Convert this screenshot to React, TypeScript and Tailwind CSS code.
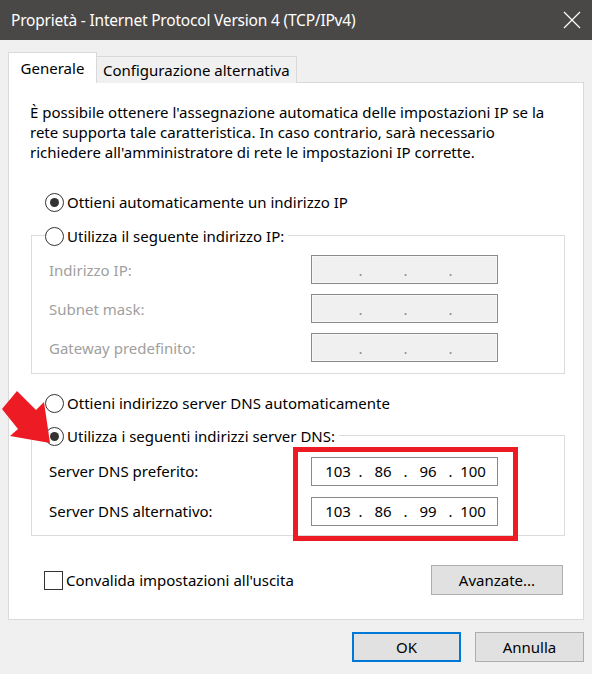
import React from 'react';

const font = { fontFamily: '"Noto Sans", "Open Sans", sans-serif' };

function Radio({ checked }: { checked?: boolean }) {
  return (
    <span className="w-[19px] h-[19px] rounded-full border border-[#333] bg-white flex items-center justify-center shrink-0">
      {checked && <span className="w-[9px] h-[9px] rounded-full bg-[#333]" />}
    </span>
  );
}

function IpBox({ values, disabled }: { values?: string[]; disabled?: boolean }) {
  const cells = values ?? ['', '', '', ''];
  return (
    <div
      className={`w-[187px] h-[29px] border border-[#8a8a8a] flex items-center pl-[8px] ${
        disabled ? 'bg-[#f0f0f0] shadow-[inset_0_0_0_1px_#f7f7f7]' : 'bg-white'
      }`}
    >
      {cells.map((v, i) => (
        <React.Fragment key={i}>
          <span className="w-[36px] text-center">{v}</span>
          {i < 3 && (
            <span className={`w-[9px] text-center ${disabled ? 'text-[#8a8aa0]' : ''}`}>.</span>
          )}
        </React.Fragment>
      ))}
    </div>
  );
}

export default function App() {
  return (
    <div className="relative w-[592px] h-[674px] bg-[#f0f0f0] text-[15px] leading-[20px] text-black overflow-hidden" style={font}>
      {/* Title bar */}
      <div className="h-[40px] bg-[#4a4846] flex items-center justify-between pl-[11px] pr-[11px]">
        <span className="text-white text-[15.5px] tracking-[-0.2px]">Proprietà - Internet Protocol Version 4 (TCP/IPv4)</span>
        <svg width="18" height="18" viewBox="0 0 18 18" className="text-white">
          <path d="M1 1 L17 17 M17 1 L1 17" stroke="currentColor" strokeWidth="1.2" />
        </svg>
      </div>

      <div className="px-[8px] pt-[12px]">
        {/* Tabs */}
        <div className="flex items-end h-[31px] relative z-10">
          <div className="w-[89px] h-[31px] bg-white border border-[#d9d9d9] border-b-0 flex items-center justify-center">
            Generale
          </div>
          <div className="h-[27px] px-[6px] bg-[#f0f0f0] border border-[#d9d9d9] border-l-0 border-b-0 flex items-center">
            Configurazione alternativa
          </div>
        </div>

        {/* Panel */}
        <div className="h-[538px] bg-white border border-[#d9d9d9] -mt-px pt-[19px] pl-[21px] pr-[20px]">
          <p className="pr-[10px]">
            È possibile ottenere l'assegnazione automatica delle impostazioni IP se la rete supporta tale
            caratteristica. In caso contrario, sarà necessario richiedere all'amministratore di rete le
            impostazioni IP corrette.
          </p>

          <div className="mt-[30px] flex items-center gap-[3px] pl-[15px]">
            <Radio checked />
            <span>Ottieni automaticamente un indirizzo IP</span>
          </div>

          {/* Group 1 */}
          <div className="mt-[23px] ml-[1px] w-[534px] h-[139px] border border-[#dcdcdc] relative">
            <div className="absolute -top-[10px] left-[13px] flex items-center gap-[3px] bg-white pr-[4px]">
              <Radio />
              <span>Utilizza il seguente indirizzo IP:</span>
            </div>
            <div className="pt-[19px] pl-[17px] flex flex-col gap-[10px] text-[#a0a0a0]">
              {['Indirizzo IP:', 'Subnet mask:', 'Gateway predefinito:'].map((l) => (
                <div key={l} className="flex items-center h-[29px]">
                  <span className="w-[262px]">{l}</span>
                  <IpBox disabled />
                </div>
              ))}
            </div>
          </div>

          <div className="mt-[19px] flex items-center gap-[3px] pl-[15px]">
            <Radio />
            <span>Ottieni indirizzo server DNS automaticamente</span>
          </div>

          {/* Group 2 */}
          <div className="mt-[22px] ml-[1px] w-[534px] h-[101px] border border-[#dcdcdc] relative">
            <div className="absolute -top-[10px] left-[13px] flex items-center gap-[3px] bg-white pr-[4px]">
              <Radio checked />
              <span>Utilizza i seguenti indirizzi server DNS:</span>
            </div>
            <div className="pt-[20px] pl-[17px] flex flex-col gap-[10px]">
              <div className="flex items-center h-[30px]">
                <span className="w-[262px]">Server DNS preferito:</span>
                <IpBox values={['103', '86', '96', '100']} />
              </div>
              <div className="flex items-center h-[30px]">
                <span className="w-[262px]">Server DNS alternativo:</span>
                <IpBox values={['103', '86', '99', '100']} />
              </div>
            </div>
          </div>

          <div className="mt-[29px] flex items-center justify-between pl-[14px]">
            <div className="flex items-center gap-[3px]">
              <span className="w-[19px] h-[19px] border border-[#333] bg-white" />
              <span>Convalida impostazioni all'uscita</span>
            </div>
            <button className="w-[132px] h-[30px] bg-[#e1e1e1] border border-[#adadad]">Avanzate...</button>
          </div>
        </div>

        {/* Dialog buttons */}
        <div className="mt-[12px] flex justify-end gap-[14px]">
          <button className="w-[109px] h-[30px] bg-[#e1e1e1] border-2 border-[#0078d7]">OK</button>
          <button className="w-[109px] h-[30px] bg-[#e1e1e1] border border-[#adadad]">Annulla</button>
        </div>
      </div>

      {/* Annotation: red box */}
      <div className="absolute left-[293px] top-[447px] w-[225px] h-[94px] border-[5px] border-[#ed1c24]" />

      {/* Annotation: red arrow */}
      <svg className="absolute left-0 top-[388px]" width="70" height="65" viewBox="0 0 70 65">
        <polygon points="17,3 36,22 44,14 50,55 10,48 18,41 2,21" fill="#ed1c24" />
      </svg>
    </div>
  );
}
